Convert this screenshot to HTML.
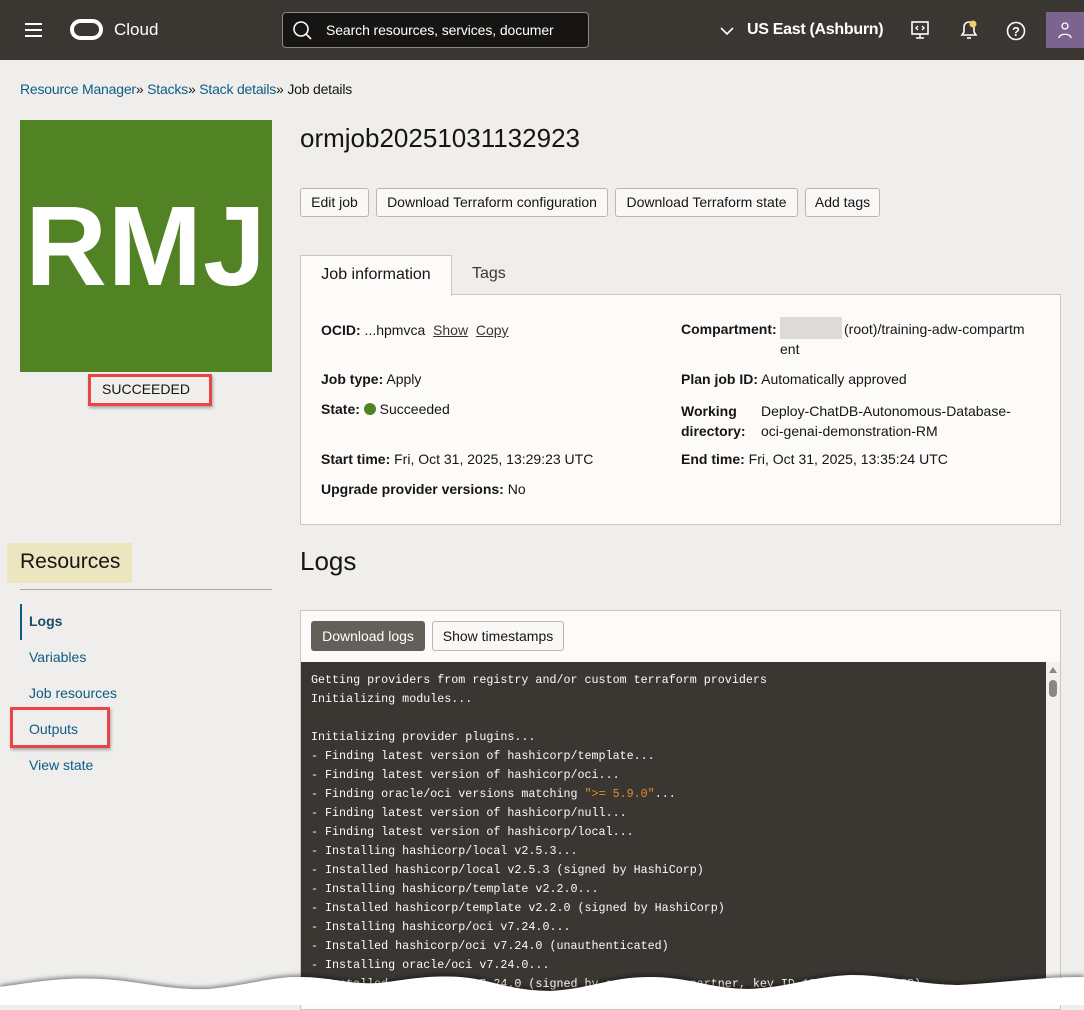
<!DOCTYPE html>
<html><head><meta charset="utf-8">
<style>
*{box-sizing:border-box;margin:0;padding:0}
body{width:1084px;height:1005px;overflow:hidden;background:#efeeec;font-family:"Liberation Sans",Arial,sans-serif;position:relative;color:#161513}
.abs{position:absolute}
.hdr{left:0;top:0;width:1084px;height:60px;background:#3a3632}
a{color:#0c5c85;text-decoration:none}
.btn{position:absolute;top:188px;height:29px;border:1px solid #b9b6b3;border-radius:3px;background:#f9f8f7;font-size:14px;line-height:27px;text-align:center;color:#161513}
.lbl{font-weight:bold}
.info{font-size:14px;position:absolute}
.log{left:301px;top:662px;width:745px;height:343px;background:#3a3632;color:#fcfbfa;font-family:"Liberation Mono",monospace;font-size:11.7px;line-height:19px;padding:9px 0 0 10px;white-space:pre}
.nav{position:absolute;left:29px;font-size:14px;color:#0c5c85}
.red{position:absolute;border:3px solid #e94545;box-shadow:1px 2px 3px rgba(0,0,0,.3)}
</style></head><body>
<div class="abs hdr">
  <div class="abs" style="left:25px;top:23px;width:17px;height:2px;background:#fff;box-shadow:0 6px 0 #fff,0 12px 0 #fff"></div>
  <div class="abs" style="left:70px;top:19px;width:33px;height:21px;border:4px solid #fff;border-radius:11px"></div>
  <div class="abs" style="left:114px;top:20px;color:#fff;font-size:17px">Cloud</div>
  <div class="abs" style="left:282px;top:12px;width:307px;height:36px;background:#161513;border:1px solid #8b8884;border-radius:4px"></div>
  <svg class="abs" style="left:292px;top:20px" width="22" height="22" viewBox="0 0 22 22"><circle cx="9" cy="9" r="7" fill="none" stroke="#fff" stroke-width="1.6"/><path d="M14 14l5 5" stroke="#fff" stroke-width="1.6"/></svg>
  <div class="abs" style="left:326px;top:22px;color:#fff;font-size:14px;letter-spacing:-0.1px">Search resources, services, documer</div>
  <svg class="abs" style="left:719px;top:25px" width="16" height="12"><path d="M2 3l6 6 6-6" fill="none" stroke="#fff" stroke-width="1.6"/></svg>
  <div class="abs" style="left:747px;top:21px;color:#fff;font-size:16px;font-weight:bold;letter-spacing:-0.3px">US East (Ashburn)</div>
  <svg class="abs" style="left:910px;top:20px" width="20" height="20"><rect x="2" y="2" width="16" height="12" fill="none" stroke="#fff" stroke-width="1.6"/><path d="M10 14v4M6 18h8M8 6l-2 2 2 2M12 6l2 2-2 2" fill="none" stroke="#fff" stroke-width="1.4"/></svg>
  <svg class="abs" style="left:958px;top:18px" width="22" height="24"><path d="M4 17h14l-2-3V9a5 5 0 0 0-10 0v5z" fill="none" stroke="#fff" stroke-width="1.6"/><path d="M9 20h4" stroke="#fff" stroke-width="1.6"/><circle cx="15" cy="6" r="3.5" fill="#f0cc71"/></svg>
  <svg class="abs" style="left:1005px;top:20px" width="22" height="22"><circle cx="11" cy="11" r="8.5" fill="none" stroke="#fff" stroke-width="1.6"/><text x="11" y="16" fill="#fff" font-size="13" font-family="Liberation Sans" font-weight="bold" text-anchor="middle">?</text></svg>
  <div class="abs" style="left:1046px;top:12px;width:38px;height:36px;background:#7b6590"></div>
  <svg class="abs" style="left:1056px;top:20px" width="18" height="20"><circle cx="9" cy="6" r="3" fill="none" stroke="#fff" stroke-width="1.3"/><path d="M3 18c0-5 12-5 12 0" fill="none" stroke="#fff" stroke-width="1.3"/></svg>
</div>

<div class="abs" style="left:20px;top:81px;font-size:14px;color:#161513;letter-spacing:-0.2px"><a>Resource Manager</a>» <a>Stacks</a>» <a>Stack details</a>» Job details</div>

<div class="abs" style="left:20px;top:120px;width:252px;height:252px;background:#518224;color:#fff;font-weight:bold;font-size:113px;line-height:252px;text-align:center;letter-spacing:1px">RMJ</div>
<div class="abs" style="left:20px;top:381px;width:252px;text-align:center;font-size:14px">SUCCEEDED</div>
<div class="red" style="left:88px;top:374px;width:124px;height:32px"></div>

<div class="abs" style="left:300px;top:123px;font-size:26px">ormjob20251031132923</div>
<div class="btn" style="left:300px;width:69px">Edit job</div>
<div class="btn" style="left:376px;width:232px">Download Terraform configuration</div>
<div class="btn" style="left:615px;width:183px">Download Terraform state</div>
<div class="btn" style="left:805px;width:75px">Add tags</div>

<div class="abs" style="left:300px;top:294px;width:761px;height:231px;background:#fcfbfa;border:1px solid #c9c6c3"></div>
<div class="abs" style="left:300px;top:255px;width:152px;height:41px;background:#fcfbfa;border:1px solid #c9c6c3;border-bottom:none;font-size:16px;line-height:38px;text-align:center">Job information</div>
<div class="abs" style="left:472px;top:265px;font-size:16px;color:#3a3632">Tags</div>

<div class="info" style="left:321px;top:322px"><span class="lbl">OCID:</span> ...hpmvca &nbsp;<u style="color:#3a3632">Show</u>&nbsp; <u style="color:#3a3632">Copy</u></div>
<div class="info" style="left:321px;top:371px"><span class="lbl">Job type:</span> Apply</div>
<div class="info" style="left:321px;top:401px"><span class="lbl">State:</span> <span style="display:inline-block;width:12px;height:12px;border-radius:50%;background:#518224;vertical-align:-1px"></span> Succeeded</div>
<div class="info" style="left:321px;top:451px"><span class="lbl">Start time:</span> Fri, Oct 31, 2025, 13:29:23 UTC</div>
<div class="info" style="left:321px;top:481px"><span class="lbl">Upgrade provider versions:</span> No</div>

<div class="info" style="left:681px;top:321px"><span class="lbl">Compartment:</span></div>
<div class="abs" style="left:780px;top:317px;width:62px;height:22px;background:#dddbd9"></div>
<div class="info" style="left:844px;top:321px">(root)/training-adw-compartm</div>
<div class="info" style="left:780px;top:341px">ent</div>
<div class="info" style="left:681px;top:371px"><span class="lbl">Plan job ID:</span> Automatically approved</div>
<div class="info" style="left:681px;top:401px;line-height:20px"><span class="lbl">Working<br>directory:</span></div>
<div class="info" style="left:761px;top:401px;line-height:20px">Deploy-ChatDB-Autonomous-Database-<br>oci-genai-demonstration-RM</div>
<div class="info" style="left:681px;top:451px"><span class="lbl">End time:</span> Fri, Oct 31, 2025, 13:35:24 UTC</div>

<div class="abs" style="left:7px;top:543px;width:125px;height:40px;background:#ebe6bf"></div>
<div class="abs" style="left:20px;top:550px;font-size:21px">Resources</div>
<div class="abs" style="left:20px;top:589px;width:252px;height:1px;background:#aaa8a5"></div>
<div class="abs" style="left:20px;top:604px;width:2px;height:36px;background:#0c5c85"></div>
<div class="nav" style="top:613px;font-weight:bold;color:#1e4a66">Logs</div>
<div class="nav" style="top:649px">Variables</div>
<div class="nav" style="top:685px">Job resources</div>
<div class="nav" style="top:721px">Outputs</div>
<div class="nav" style="top:757px">View state</div>
<div class="red" style="left:10px;top:707px;width:100px;height:41px"></div>

<div class="abs" style="left:300px;top:546px;font-size:26px">Logs</div>
<div class="abs" style="left:300px;top:610px;width:761px;height:400px;background:#fcfbfa;border:1px solid #c9c6c3"></div>
<div class="abs" style="left:311px;top:621px;width:114px;height:30px;background:#655f5a;color:#fff;border-radius:3px;font-size:14px;line-height:30px;text-align:center">Download logs</div>
<div class="abs" style="left:432px;top:621px;width:132px;height:30px;background:#f9f8f7;border:1px solid #b9b6b3;border-radius:3px;font-size:14px;line-height:28px;text-align:center">Show timestamps</div>
<div class="abs log">Getting providers from registry and/or custom terraform providers
Initializing modules...

Initializing provider plugins...
- Finding latest version of hashicorp/template...
- Finding latest version of hashicorp/oci...
- Finding oracle/oci versions matching <span style="color:#e8892f">"&gt;= 5.9.0"</span>...
- Finding latest version of hashicorp/null...
- Finding latest version of hashicorp/local...
- Installing hashicorp/local v2.5.3...
- Installed hashicorp/local v2.5.3 (signed by HashiCorp)
- Installing hashicorp/template v2.2.0...
- Installed hashicorp/template v2.2.0 (signed by HashiCorp)
- Installing hashicorp/oci v7.24.0...
- Installed hashicorp/oci v7.24.0 (unauthenticated)
- Installing oracle/oci v7.24.0...
- Installed oracle/oci v7.24.0 (signed by a HashiCorp partner, key ID 1533A49284137CEB)</div>
<div class="abs" style="left:1046px;top:662px;width:14px;height:343px;background:#f2f1f0"></div>
<svg class="abs" style="left:1047px;top:664px" width="12" height="36"><path d="M2 9l4-6 4 6z" fill="#8a8784"/><rect x="2" y="16" width="8" height="17" rx="4" fill="#8a8784"/></svg>

<svg class="abs" style="left:0;top:955px" width="1084" height="50" viewBox="0 0 1084 50">
<defs><filter id="s" x="-5%" y="-50%" width="110%" height="200%"><feDropShadow dx="0" dy="-2" stdDeviation="2" flood-color="#000" flood-opacity=".45"/></filter></defs>
<path filter="url(#s)" d="M0 32 C30 28 60 22 100 24 C140 26 170 36 210 34 C250 30 270 22 300 22 C330 22 350 30 380 28 C410 24 430 20 460 22 C490 24 510 36 550 36 C590 34 610 22 650 22 C690 22 710 34 750 34 C790 32 810 22 850 20 C890 20 920 30 960 30 C1000 28 1040 22 1084 22 L1084 50 L0 50 Z" fill="#fff"/>
</svg>
</body></html>
